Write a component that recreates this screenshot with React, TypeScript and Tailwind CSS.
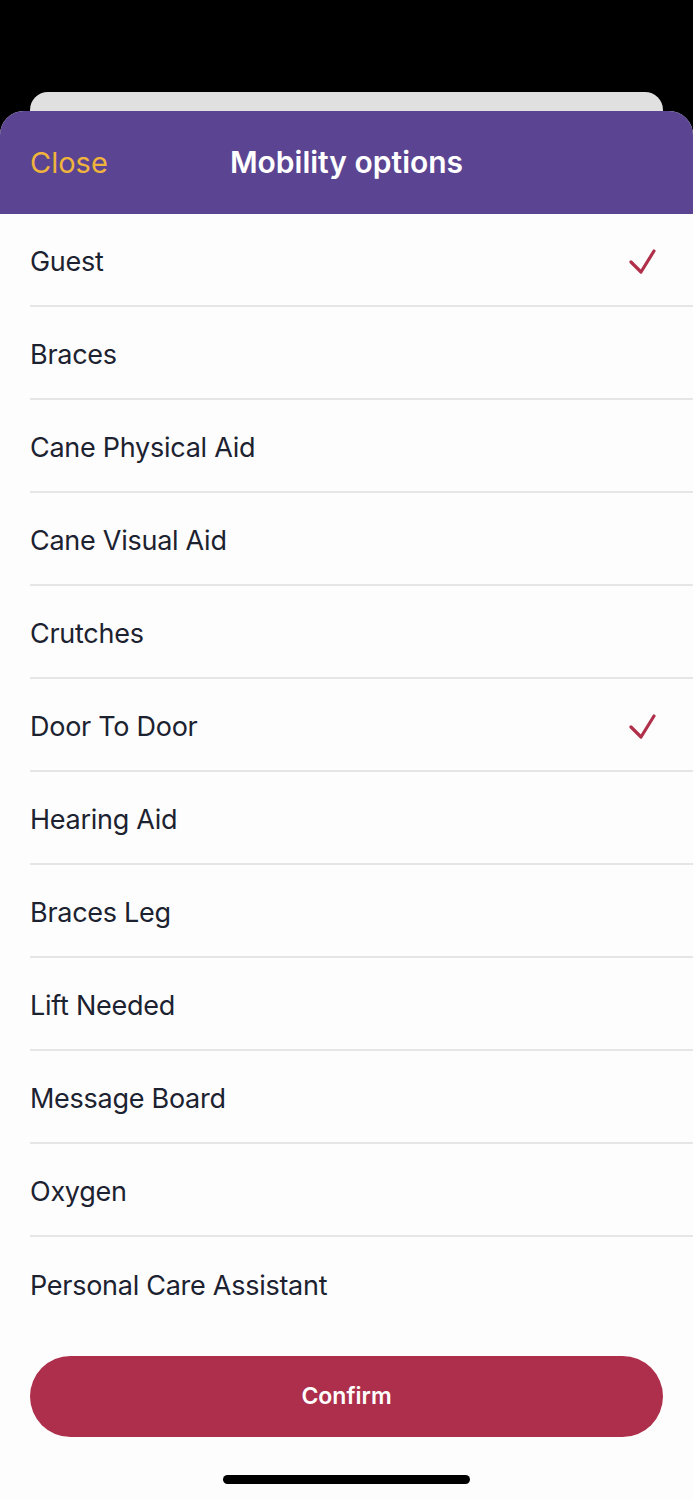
const options = [
  { label: 'Guest', checked: true },
  { label: 'Braces', checked: false },
  { label: 'Cane Physical Aid', checked: false },
  { label: 'Cane Visual Aid', checked: false },
  { label: 'Crutches', checked: false },
  { label: 'Door To Door', checked: true },
  { label: 'Hearing Aid', checked: false },
  { label: 'Braces Leg', checked: false },
  { label: 'Lift Needed', checked: false },
  { label: 'Message Board', checked: false },
  { label: 'Oxygen', checked: false },
  { label: 'Personal Care Assistant', checked: false },
];

const Check = () => (
  <svg width="30" height="28" viewBox="0 0 30 28" fill="none">
    <path
      d="M4 16 L14 26 L27 5"
      stroke="#b0304b"
      strokeWidth="3.2"
      strokeLinecap="round"
      strokeLinejoin="round"
    />
  </svg>
);

const App = () => {
  return (
    <div
      className="w-[693px] h-[1500px] bg-black flex flex-col overflow-hidden"
      style={{ fontFamily: 'Inter, "Noto Sans", sans-serif' }}
    >
      <div className="h-[92px]" />
      <div className="mx-[30px] h-[40px] -mb-[21px] rounded-t-[18px] bg-[#e0e0e0]" />
      <div className="relative flex-1 flex flex-col rounded-t-[24px] bg-[#fdfdfd] overflow-hidden">
        {/* header */}
        <div className="relative h-[103px] bg-[#5b4593] flex items-center px-[30px]">
          <button className="text-[29px] text-[#f0b43c]">Close</button>
          <h1 className="absolute left-0 right-0 text-center text-[30px] font-semibold text-white pointer-events-none">
            Mobility options
          </h1>
        </div>

        {/* list */}
        <ul className="flex flex-col">
          {options.map((item, i) => (
            <li
              key={item.label}
              className={`ml-[30px] h-[93px] flex items-center justify-between pr-[36px] ${
                i < options.length - 1 ? 'border-b-2 border-[#e6e6e6]' : ''
              }`}
            >
              <span className="pt-[6px] text-[27px] text-[#1c2230] tracking-[-0.01em]">{item.label}</span>
              {item.checked && <Check />}
            </li>
          ))}
        </ul>

        <div className="px-[30px] mt-[26px]">
          <button className="w-full h-[81px] rounded-full bg-[#ae2f4b] text-white text-[23px] font-semibold">
            Confirm
          </button>
        </div>

        <div className="flex justify-center mt-[38px]">
          <div className="w-[247px] h-[9px] rounded-full bg-black" />
        </div>
      </div>
    </div>
  );
};

export default App;
